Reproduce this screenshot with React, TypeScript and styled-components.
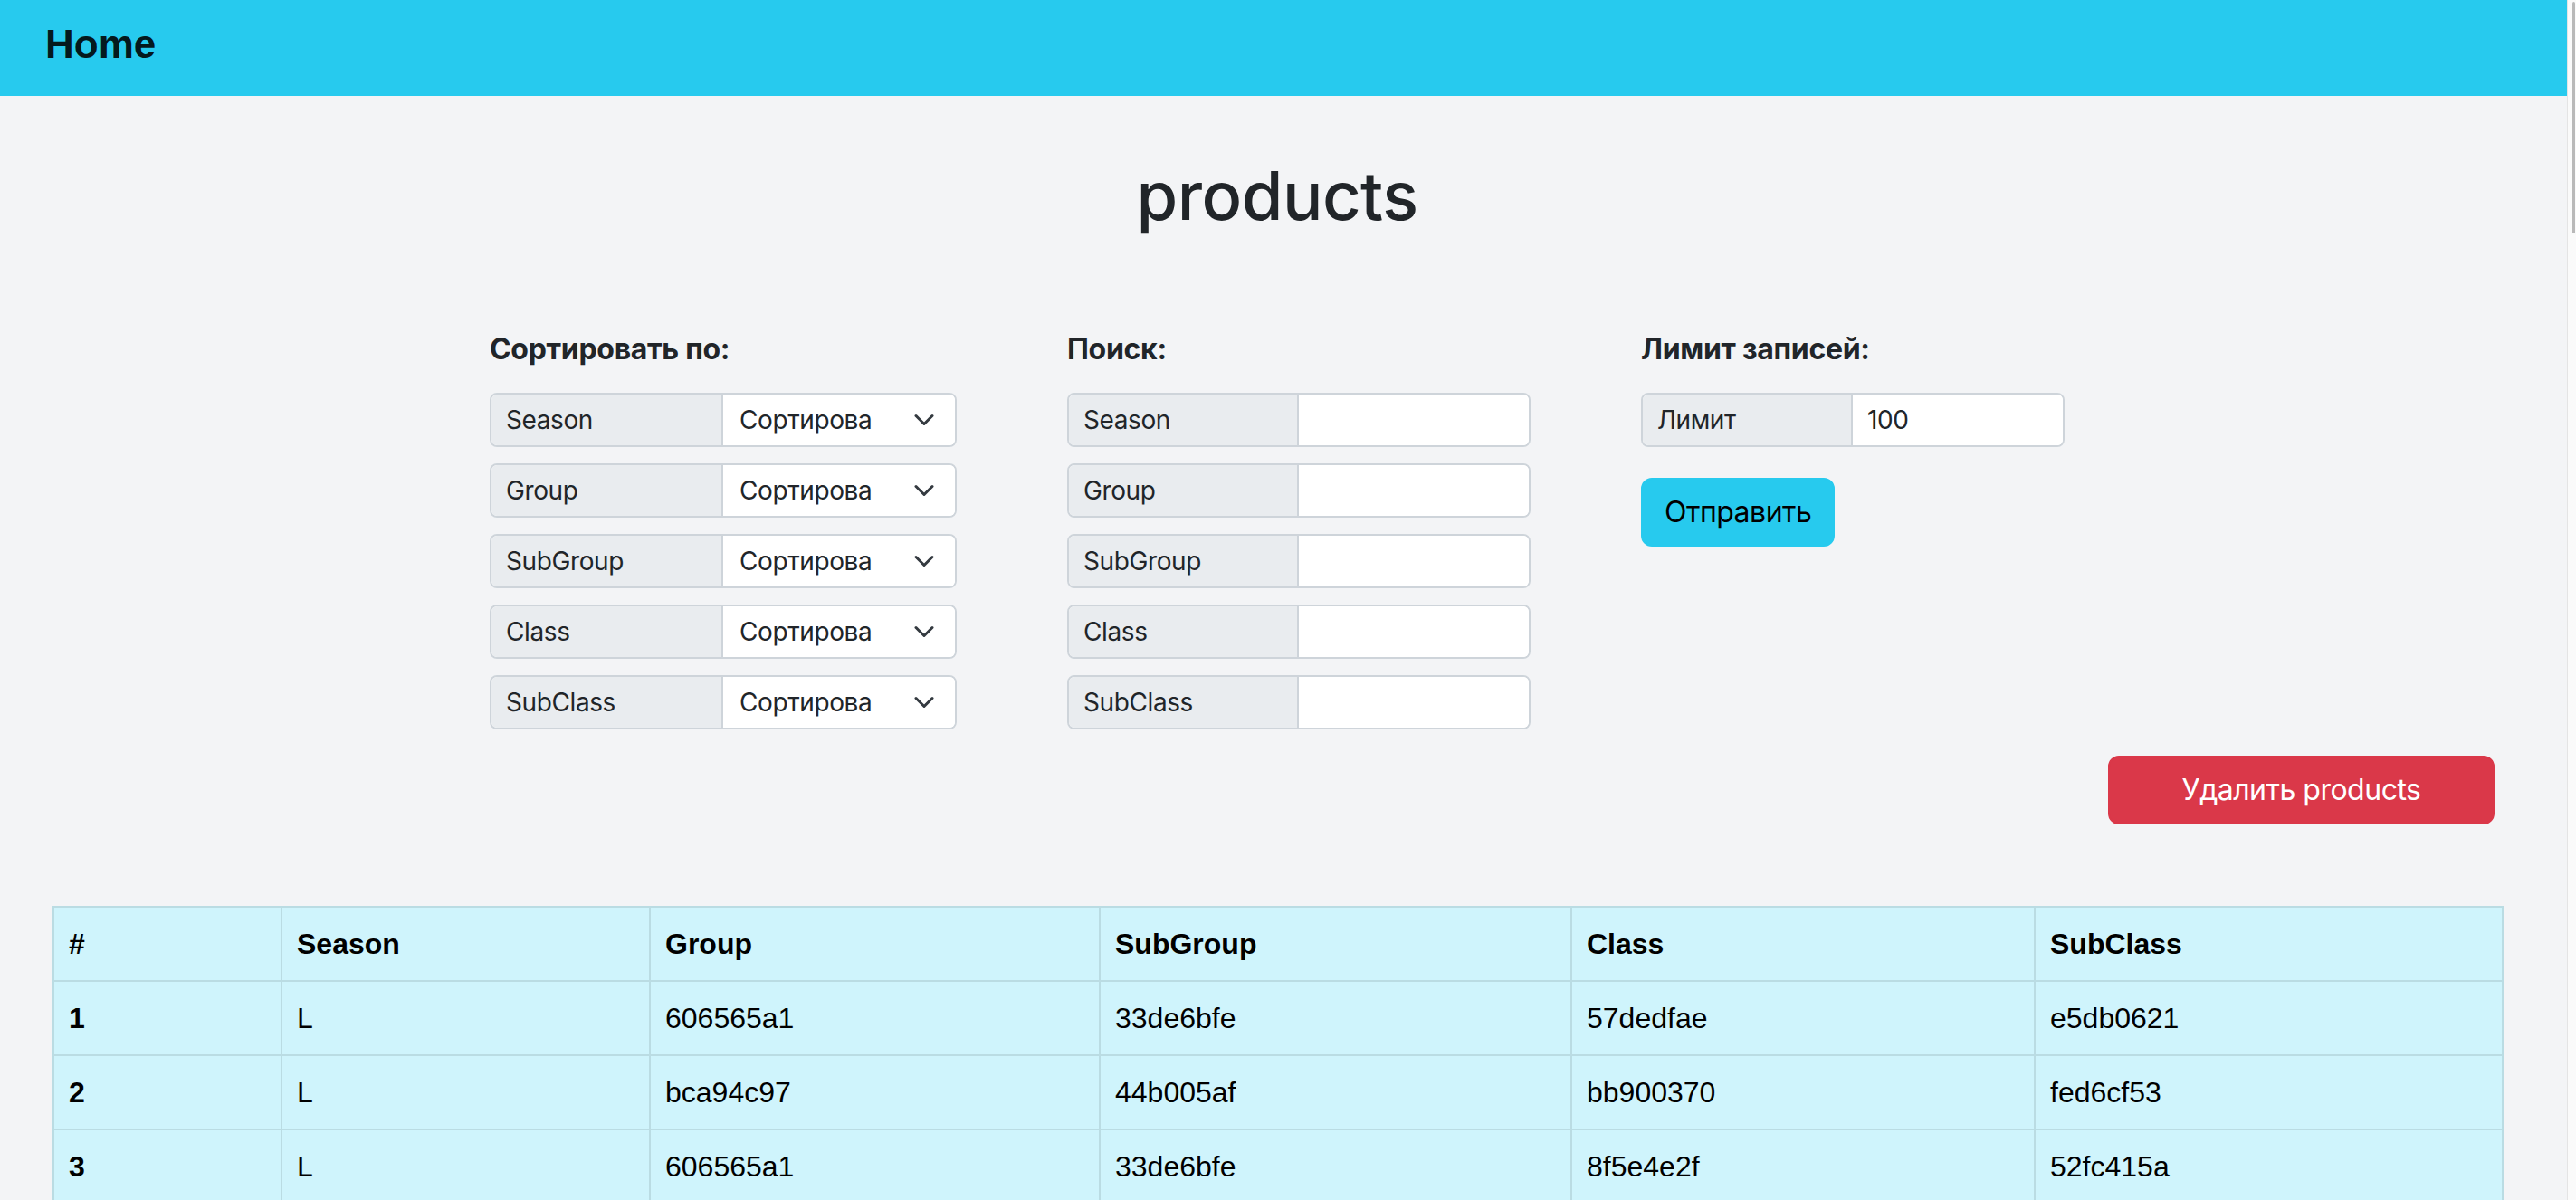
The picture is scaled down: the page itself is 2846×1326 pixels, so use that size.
import React from "react";
import styled, { createGlobalStyle } from "styled-components";

const GlobalStyle = createGlobalStyle`
  html, body {
    margin: 0;
    padding: 0;
    overflow: hidden;
  }
  body {
    background: #f3f4f6;
    color: #212529;
    font-family: Inter, "Noto Sans", sans-serif;
  }
  * { box-sizing: border-box; }
`;

const Page = styled.div`
  min-height: 100vh;
  background: #f3f4f6;
`;

const ScrollRail = styled.div`
  position: fixed;
  top: 0;
  right: 0;
  bottom: 0;
  width: 10px;
  display: flex;
  justify-content: flex-end;
  align-items: flex-start;
  padding: 2px 1px;
  background: #fafafa;
  border-left: 1px solid #e4e4e4;
`;

const ScrollThumb = styled.div`
  width: 3px;
  height: 256px;
  border-radius: 2px;
  background: #b9b9b9;
`;

const NavBar = styled.header`
  height: 106px;
  background: #27caee;
  display: flex;
  align-items: center;
  padding: 0 50px 8px;
`;

const Brand = styled.a`
  font-family: "Liberation Sans", Arial, sans-serif;
  font-weight: 700;
  font-size: 44px;
  color: rgba(0, 0, 0, 0.9);
  text-decoration: none;
`;

const Main = styled.main`
  padding: 0 82px 0 58px;
`;

const Title = styled.h1`
  margin: 66px 0 0;
  text-align: center;
  font-weight: 500;
  font-size: 74px;
  letter-spacing: -0.5px;
  line-height: 1.2;
  color: #212529;
`;

const Filters = styled.section`
  display: flex;
  justify-content: center;
  align-items: flex-start;
  gap: 122px;
  margin-top: 106px;
`;

const FilterColumn = styled.div<{ $width: number }>`
  width: ${(p) => p.$width}px;
  display: flex;
  flex-direction: column;
  align-items: stretch;
`;

const ColumnHeading = styled.h5`
  margin: 0 0 29px;
  font-weight: 700;
  font-size: 32px;
  letter-spacing: -0.3px;
  line-height: 1.2;
  color: #212529;
`;

const FieldList = styled.div`
  display: flex;
  flex-direction: column;
  gap: 18px;
`;

const InputGroup = styled.div`
  display: grid;
  grid-template-columns: 1fr 1fr;
  height: 60px;
  border: 2px solid #ced4da;
  border-radius: 8px;
  overflow: hidden;
  background: #fff;
`;

const GroupLabel = styled.span`
  display: flex;
  align-items: center;
  padding: 0 16px;
  background: #e9ecef;
  border-right: 2px solid #ced4da;
  font-size: 28px;
  letter-spacing: -0.4px;
  color: #212529;
`;

const SelectBox = styled.div`
  display: flex;
  align-items: center;
  justify-content: space-between;
  padding: 0 22px 0 18px;
  font-size: 28px;
  letter-spacing: -0.4px;
  color: #212529;
  background: #fff;
  white-space: nowrap;
  overflow: hidden;
`;

const Chevron = styled.svg`
  width: 24px;
  height: 24px;
  flex: none;
`;

const TextField = styled.input`
  min-width: 0;
  width: 100%;
  border: none;
  outline: none;
  padding: 0 16px;
  background: #fff;
  font-family: Inter, "Noto Sans", sans-serif;
  font-size: 28px;
  letter-spacing: -0.4px;
  color: #212529;
`;

const Button = styled.button<{ $variant: "info" | "danger" }>`
  font-family: Inter, "Noto Sans", sans-serif;
  font-size: 32px;
  font-weight: 400;
  letter-spacing: -0.5px;
  line-height: 1.5;
  padding: 12px 24px;
  border-radius: 12px;
  border: 2px solid ${(p) => (p.$variant === "info" ? "#27caee" : "#da3849")};
  background: ${(p) => (p.$variant === "info" ? "#27caee" : "#da3849")};
  color: ${(p) => (p.$variant === "info" ? "#000" : "#fff")};
  cursor: pointer;
`;

const SubmitButton = styled(Button)`
  margin-top: 34px;
  align-self: flex-start;
`;

const ActionRow = styled.div`
  display: flex;
  justify-content: flex-end;
  margin-top: 29px;
  padding-right: 8px;
`;

const DeleteButton = styled(Button)`
  width: 427px;
`;

const DataTable = styled.table`
  margin-top: 90px;
  width: 100%;
  table-layout: fixed;
  border-collapse: collapse;
  background: #cff4fc;
  font-family: "Liberation Sans", Arial, sans-serif;
  font-size: 32px;
  color: #000;
`;

const Col = styled.col<{ $width: number }>`
  width: ${(p) => p.$width}px;
`;

const HeadCell = styled.th`
  padding: 16px;
  line-height: 48px;
  border: 2px solid #badce3;
  text-align: left;
  font-weight: 700;
`;

const Cell = styled.td`
  padding: 16px;
  line-height: 48px;
  border: 2px solid #badce3;
  text-align: left;
  font-weight: 400;
`;

const FIELDS = ["Season", "Group", "SubGroup", "Class", "SubClass"];
const COLUMNS = ["#", "Season", "Group", "SubGroup", "Class", "SubClass"];
const COL_WIDTHS = [252, 407, 497, 521, 512, 517];

type Row = { season: string; group: string; subGroup: string; cls: string; subClass: string };

const ROWS: Row[] = [
  { season: "L", group: "606565a1", subGroup: "33de6bfe", cls: "57dedfae", subClass: "e5db0621" },
  { season: "L", group: "bca94c97", subGroup: "44b005af", cls: "bb900370", subClass: "fed6cf53" },
  { season: "L", group: "606565a1", subGroup: "33de6bfe", cls: "8f5e4e2f", subClass: "52fc415a" },
];

const ChevronIcon = () => (
  <Chevron viewBox="0 0 16 16" fill="none">
    <path d="m2 5 6 6 6-6" stroke="#343a40" strokeWidth="2" strokeLinecap="round" strokeLinejoin="round" />
  </Chevron>
);

export default function App() {
  return (
    <>
      <GlobalStyle />
      <Page>
        <NavBar>
          <Brand href="#">Home</Brand>
        </NavBar>
        <Main>
          <Title>products</Title>
          <Filters>
            <FilterColumn $width={516}>
              <ColumnHeading>Сортировать по:</ColumnHeading>
              <FieldList>
                {FIELDS.map((f) => (
                  <InputGroup key={f}>
                    <GroupLabel>{f}</GroupLabel>
                    <SelectBox>
                      <span>Сортирова</span>
                      <ChevronIcon />
                    </SelectBox>
                  </InputGroup>
                ))}
              </FieldList>
            </FilterColumn>
            <FilterColumn $width={512}>
              <ColumnHeading>Поиск:</ColumnHeading>
              <FieldList>
                {FIELDS.map((f) => (
                  <InputGroup key={f}>
                    <GroupLabel>{f}</GroupLabel>
                    <TextField type="text" />
                  </InputGroup>
                ))}
              </FieldList>
            </FilterColumn>
            <FilterColumn $width={468}>
              <ColumnHeading>Лимит записей:</ColumnHeading>
              <FieldList>
                <InputGroup>
                  <GroupLabel>Лимит</GroupLabel>
                  <TextField type="text" defaultValue="100" />
                </InputGroup>
              </FieldList>
              <SubmitButton $variant="info">Отправить</SubmitButton>
            </FilterColumn>
          </Filters>
          <ActionRow>
            <DeleteButton $variant="danger">Удалить products</DeleteButton>
          </ActionRow>
          <DataTable>
            <colgroup>
              {COL_WIDTHS.map((w, i) => (
                <Col key={i} $width={w} />
              ))}
            </colgroup>
            <thead>
              <tr>
                {COLUMNS.map((c) => (
                  <HeadCell key={c}>{c}</HeadCell>
                ))}
              </tr>
            </thead>
            <tbody>
              {ROWS.map((r, i) => (
                <tr key={i}>
                  <HeadCell scope="row">{i + 1}</HeadCell>
                  <Cell>{r.season}</Cell>
                  <Cell>{r.group}</Cell>
                  <Cell>{r.subGroup}</Cell>
                  <Cell>{r.cls}</Cell>
                  <Cell>{r.subClass}</Cell>
                </tr>
              ))}
            </tbody>
          </DataTable>
        </Main>
        <ScrollRail aria-hidden="true">
          <ScrollThumb />
        </ScrollRail>
      </Page>
    </>
  );
}
